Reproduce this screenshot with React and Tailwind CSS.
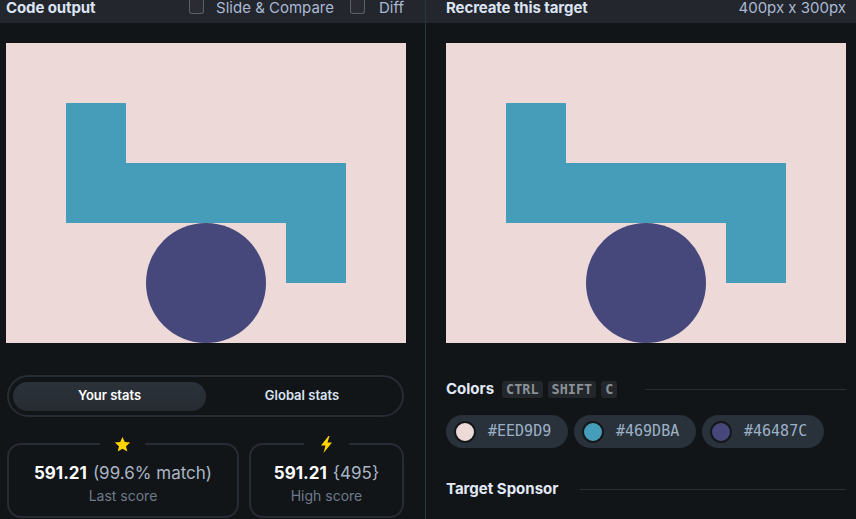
import React from "react";

function Scene() {
  return (
    <div className="relative w-[400px] h-[300px] bg-[#EED9D9] overflow-hidden shrink-0">
      <svg width="400" height="300" viewBox="0 0 400 300" className="block">
        <rect x="0" y="0" width="400" height="300" fill="#EED9D9" />
        <rect x="60" y="60" width="60" height="120" fill="#469DBA" />
        <rect x="60" y="120" width="280" height="60" fill="#469DBA" />
        <rect x="280" y="120" width="60" height="120" fill="#469DBA" />
        <circle cx="200" cy="240" r="60" fill="#46487C" />
      </svg>
    </div>
  );
}

function Checkbox() {
  return <span className="inline-block w-[15px] h-[14px] rounded-b-[3px] border-[1.5px] border-t-0 border-[#5b5f69] bg-[#2b2c33]" />;
}

function Star() {
  return (
    <svg width="17" height="17" viewBox="0 0 24 24">
      <path d="M12 1.5l3.2 7 7.6.7-5.8 5.1 1.8 7.5L12 17.9l-6.8 3.9 1.8-7.5-5.8-5.1 7.6-.7z" fill="#FFD400" />
    </svg>
  );
}

function Bolt() {
  return (
    <svg width="13" height="17" viewBox="0 0 13 17">
      <path d="M8.5 0L1 9.5h4.5L3.5 17 12 6.5H7.5L9.5 0z" fill="#FFD400" />
    </svg>
  );
}

function Chip({ color, label }) {
  return (
    <div className="flex items-center h-[33px] w-[122px] rounded-full bg-[#29323b] pl-[8px] gap-[12px]">
      <span className="w-[22px] h-[22px] rounded-full border-2 border-[#15181b]" style={{ backgroundColor: color }} />
      <span className="font-['DejaVu_Sans_Mono',monospace] text-[15px] text-[#9db1c6]">{label}</span>
    </div>
  );
}

function Kbd({ children }) {
  return (
    <span className="h-[17px] px-[4px] rounded-[3px] bg-[#23272b] font-['DejaVu_Sans_Mono',monospace] font-bold text-[13.5px] leading-[17px] text-[#8a9097]">
      {children}
    </span>
  );
}

export default function App() {
  return (
    <div className="w-[856px] h-[519px] overflow-hidden flex bg-[#121518] font-['Inter',sans-serif] text-[#dbe3f2]">
      {/* Left panel */}
      <div className="w-[426px] shrink-0 border-r border-[#2c3640] flex flex-col">
        <div className="h-[23px] bg-[#23262d] pl-[6px] pr-[21px] flex items-start justify-between">
          <span className="text-[15px] font-bold leading-[16px] tracking-[-0.1px]">Code output</span>
          <div className="flex items-start">
            <div className="flex items-start gap-[12px]">
              <Checkbox />
              <span className="text-[15px] leading-[16px] text-[#aab9d3]">Slide &amp; Compare</span>
            </div>
            <div className="flex items-start gap-[14px] ml-[16px]">
              <Checkbox />
              <span className="text-[15px] leading-[16px] text-[#aab9d3]">Diff</span>
            </div>
          </div>
        </div>
        <div className="pt-[20px] px-[6px]">
          <Scene />
        </div>
        <div className="mt-[32px] mx-[7px] w-[397px] h-[42px] rounded-full border-2 border-[#262c33] flex items-center px-[4px]">
          <div className="w-[193px] h-[29px] rounded-full bg-gradient-to-b from-[#2c323a] to-[#262b32] flex items-center justify-center text-[13px] font-semibold text-white">
            Your stats
          </div>
          <div className="flex-1 flex items-center justify-center text-[13px] font-semibold text-[#dbe3f2]">Global stats</div>
        </div>
        <div className="mt-[26px] mx-[7px] w-[397px] flex gap-[10px]">
          <div className="relative w-[232px] h-[75px] rounded-[14px] border-2 border-[#262c33] flex flex-col items-center pt-[18px]">
            <div className="absolute -top-[11px] left-[91px] w-[45px] h-[20px] bg-[#121518] flex items-center justify-center">
              <Star />
            </div>
            <div className="flex items-baseline gap-[6px] text-[17px] leading-[21px]">
              <span className="font-bold text-white">591.21</span>
              <span className="text-[#aab4c4]">(99.6% match)</span>
            </div>
            <div className="text-[14px] leading-[18px] mt-[3px] text-[#6e7a8b]">Last score</div>
          </div>
          <div className="relative flex-1 h-[75px] rounded-[14px] border-2 border-[#262c33] flex flex-col items-center pt-[18px]">
            <div className="absolute -top-[11px] left-[53px] w-[45px] h-[20px] bg-[#121518] flex items-center justify-center">
              <Bolt />
            </div>
            <div className="flex items-baseline gap-[6px] text-[17px] leading-[21px]">
              <span className="font-bold text-white">591.21</span>
              <span className="text-[#aab4c4]">{"{495}"}</span>
            </div>
            <div className="text-[14px] leading-[18px] mt-[3px] text-[#6e7a8b]">High score</div>
          </div>
        </div>
      </div>
      {/* Right panel */}
      <div className="w-[430px] shrink-0 flex flex-col">
        <div className="h-[23px] w-[430px] bg-[#23262d] pl-[20px] pr-[10px] flex items-start justify-between">
          <span className="text-[15px] font-bold leading-[16px] tracking-[-0.1px]">Recreate this target</span>
          <span className="text-[15px] leading-[16px] text-[#aab9d3]">400px x 300px</span>
        </div>
        <div className="pt-[20px] px-[20px]">
          <Scene />
        </div>
        <div className="mt-[38px] pl-[20px] pr-[10px] flex items-center h-[17px]">
          <span className="text-[15px] font-bold mr-[8px] text-[#e2e9f6]">Colors</span>
          <div className="flex gap-[5px]">
            <Kbd>CTRL</Kbd>
            <Kbd>SHIFT</Kbd>
            <Kbd>C</Kbd>
          </div>
          <div className="flex-1 h-px bg-[#2a2f35] ml-[28px]" />
        </div>
        <div className="mt-[17px] px-[20px] flex gap-[6px]">
          <Chip color="#EED9D9" label="#EED9D9" />
          <Chip color="#469DBA" label="#469DBA" />
          <Chip color="#46487C" label="#46487C" />
        </div>
        <div className="mt-[33px] pl-[20px] pr-[10px] flex items-center h-[17px]">
          <span className="text-[15px] font-bold text-[#e2e9f6]">Target Sponsor</span>
          <div className="flex-1 h-px bg-[#2a2f35] ml-[22px]" />
        </div>
      </div>
    </div>
  );
}
